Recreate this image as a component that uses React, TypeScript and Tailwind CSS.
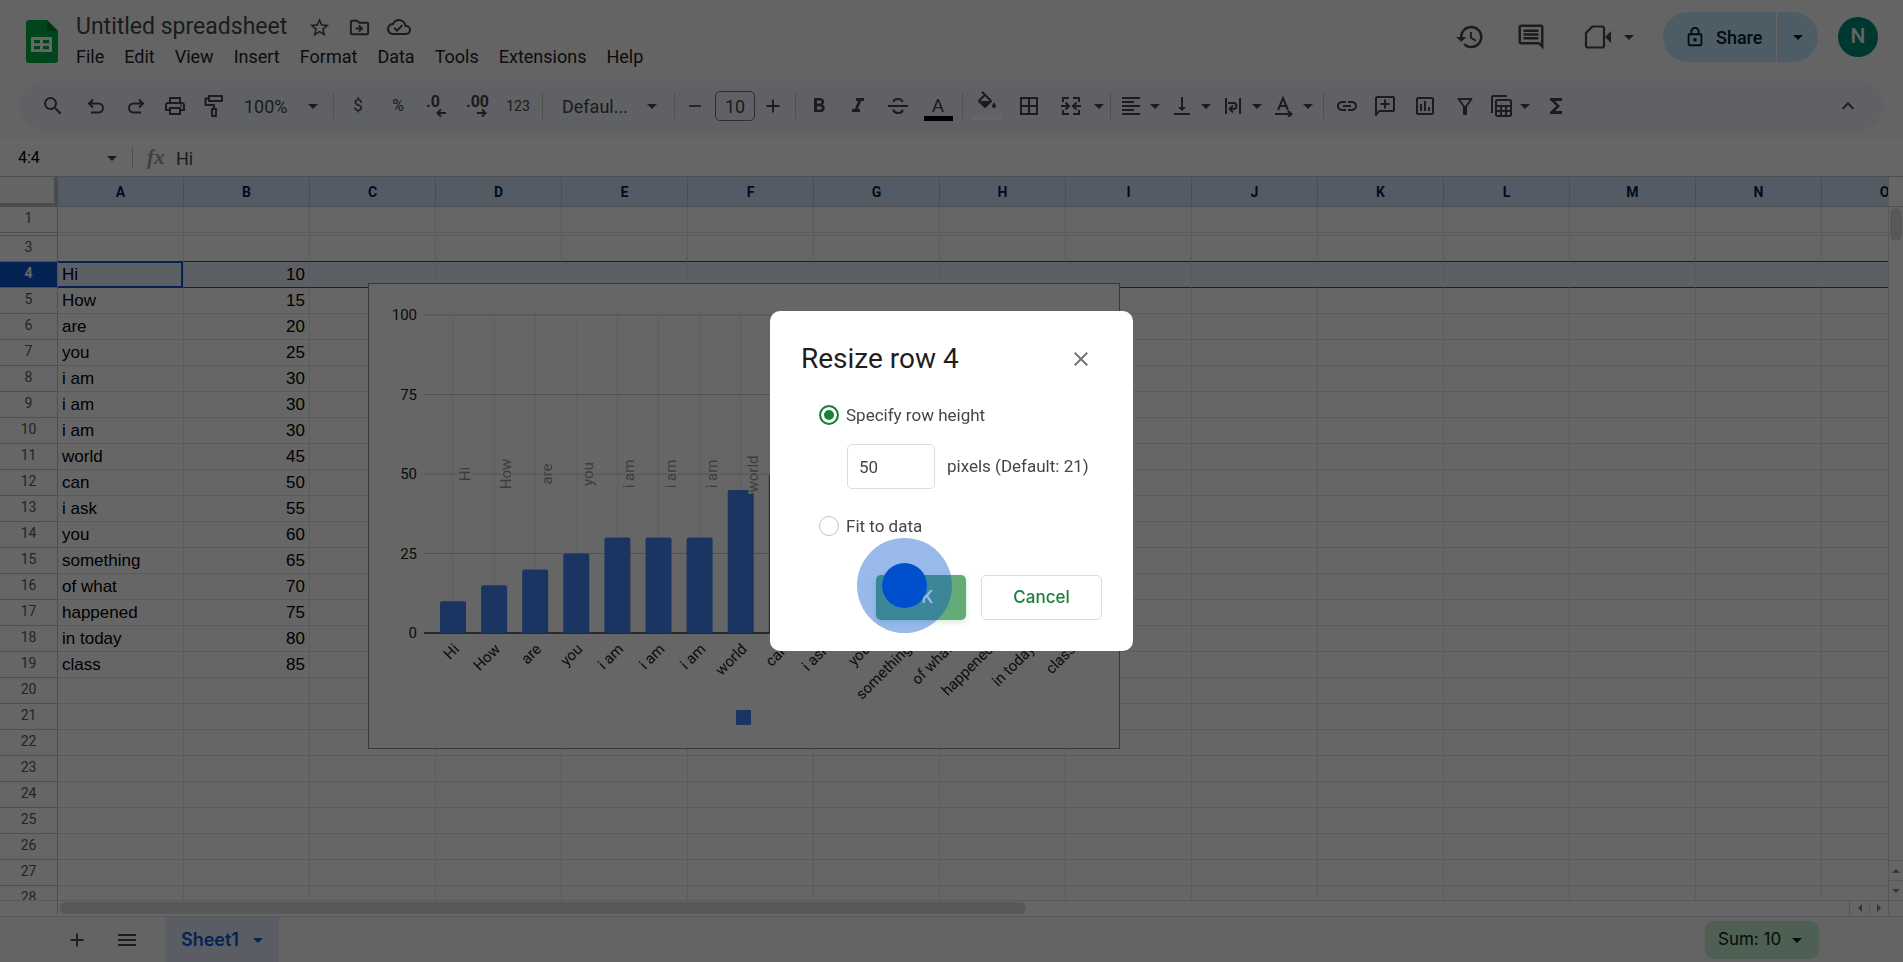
import type { ReactNode } from "react";
import {
  MdAdd,
  MdArrowDropDown,
  MdBorderAll,
  MdClose,
  MdFormatAlignLeft,
  MdFormatBold,
  MdFormatItalic,
  MdFunctions,
  MdHistory,
  MdKeyboardArrowUp,
  MdLink,
  MdMenu,
  MdOutlineCloudDone,
  MdOutlineDriveFileMove,
  MdOutlineInsertChart,
  MdOutlineInsertComment,
  MdOutlineLock,
  MdOutlinePrint,
  MdRemove,
  MdSearch,
  MdStarBorder,
  MdVerticalAlignBottom,
} from "react-icons/md";

const menus = ["File", "Edit", "View", "Insert", "Format", "Data", "Tools", "Extensions", "Help"];

const columns = ["A", "B", "C", "D", "E", "F", "G", "H", "I", "J", "K", "L", "M", "N", "O"];

const entries = [
  { label: "Hi", value: 10 },
  { label: "How", value: 15 },
  { label: "are", value: 20 },
  { label: "you", value: 25 },
  { label: "i am", value: 30 },
  { label: "i am", value: 30 },
  { label: "i am", value: 30 },
  { label: "world", value: 45 },
  { label: "can", value: 50 },
  { label: "i ask", value: 55 },
  { label: "you", value: 60 },
  { label: "something", value: 65 },
  { label: "of what", value: 70 },
  { label: "happened", value: 75 },
  { label: "in today", value: 80 },
  { label: "class", value: 85 },
];

// row 2 is collapsed
const rows = Array.from({ length: 28 }, (_, i) => i + 1);

const roboto = "font-['Roboto','Liberation_Sans',sans-serif]";
const inter = "font-['Inter','Roboto',sans-serif]";

function Sep() {
  return <span className="mx-1 h-[26px] w-px shrink-0 bg-[#c7c7c7]" />;
}

function Tool({ label, className = "w-10", children }: { label: string; className?: string; children: ReactNode }) {
  return (
    <button aria-label={label} className={`flex h-9 shrink-0 items-center justify-center ${className}`}>
      {children}
    </button>
  );
}

function Caret({ label, className = "w-4" }: { label: string; className?: string }) {
  return (
    <button aria-label={label} className={`flex h-9 shrink-0 items-center justify-center ${className}`}>
      <MdArrowDropDown className="size-6 shrink-0" />
    </button>
  );
}

function SheetsLogo() {
  return (
    <svg viewBox="0 0 32 43" className="h-[43px] w-8 shrink-0" aria-hidden="true">
      <path d="M3 0h18l11 11v29a3 3 0 0 1-3 3H3a3 3 0 0 1-3-3V3a3 3 0 0 1 3-3z" fill="#00ac47" />
      <path d="M21 0l11 11H21z" fill="#00832d" />
      <path d="M5 17h21v15H5zM8 20v3.200h6V20zm9 0v3.200h6V20zM8 26v3.200h6V26zm9 0v3.200h6V26z" fill="#fff" fillRule="evenodd" />
    </svg>
  );
}

function VideoIcon() {
  return (
    <svg viewBox="0 0 28 28" className="size-7" aria-hidden="true">
      <path d="M8.500 3.500H18a2 2 0 0 1 2 2v17a2 2 0 0 1-2 2H4a2 2 0 0 1-2-2V10z" fill="none" stroke="currentColor" strokeWidth="2.200" strokeLinejoin="round" />
      <path d="M21 14l6-6v12z" fill="currentColor" />
    </svg>
  );
}

function UndoIcon() {
  return (
    <svg viewBox="0 0 20 20" className="size-5" fill="none" stroke="currentColor" strokeWidth="2" aria-hidden="true">
      <path d="M7 3.500L3 7.500l4 4M3.500 7.500h9a4.500 4.500 0 0 1 0 9H5" />
    </svg>
  );
}

function RedoIcon() {
  return (
    <svg viewBox="0 0 20 20" className="size-5" fill="none" stroke="currentColor" strokeWidth="2" aria-hidden="true">
      <path d="M13 3.500l4 4-4 4M16.500 7.500h-9a4.500 4.500 0 0 0 0 9H15" />
    </svg>
  );
}

function PaintIcon() {
  return (
    <svg viewBox="0 0 22 24" className="h-6 w-[22px]" fill="none" stroke="currentColor" strokeWidth="2" aria-hidden="true">
      <path d="M5 2h13v5H5zM5 4.500H1.500V11H10v4" strokeLinejoin="round" />
      <path d="M8 15h4v7H8z" strokeLinejoin="round" />
    </svg>
  );
}

function DecimalIcon({ digits, increase }: { digits: string; increase?: boolean }) {
  return (
    <svg viewBox="0 0 26 28" className="h-7 w-[26px]" aria-hidden="true">
      <text x="1" y="15" fontSize="16" fontWeight="700" fill="currentColor" className={roboto}>
        {digits}
      </text>
      <path
        d={increase ? "M12 21h8M17 17.500l3.500 3.500-3.500 3.500" : "M21 21h-8M16 17.500L12.500 21l3.500 3.500"}
        fill="none"
        stroke="currentColor"
        strokeWidth="2"
      />
    </svg>
  );
}

function StrikeIcon() {
  return (
    <svg viewBox="0 0 22 22" className="size-[22px]" fill="none" stroke="currentColor" strokeWidth="2.200" aria-hidden="true">
      <path d="M1 11h20" strokeWidth="2" />
      <path d="M15.500 7c-.3-2-2-3-4.500-3S6.700 5 6.500 7M6.500 14.500c.3 2.500 2 3.500 4.500 3.500s4.500-1.300 4.500-3.500" />
    </svg>
  );
}

function FillIcon() {
  return (
    <svg viewBox="0 0 24 24" className="size-6" aria-hidden="true">
      <path d="M16.560 8.940L7.620 0 6.210 1.410l2.380 2.380-5.150 5.150c-.59.590-.59 1.540 0 2.120l5.500 5.500c.29.290.68.440 1.060.440s.77-.15 1.060-.44l5.500-5.500c.59-.58.590-1.530 0-2.120zM5.210 10L10 5.210 14.790 10zM19 11.500s-2 2.170-2 3.500c0 1.100.9 2 2 2s2-.9 2-2c0-1.330-2-3.500-2-3.500z" fill="currentColor" />
    </svg>
  );
}

function MergeIcon() {
  return (
    <svg viewBox="0 0 22 22" className="size-[22px]" fill="none" stroke="currentColor" strokeWidth="2" aria-hidden="true">
      <path d="M9 3H3v4M13 3h6v4M9 19H3v-4M13 19h6v-4" />
      <path d="M1 11h7M5.500 7.500L9 11l-3.500 3.500M21 11h-7M16.500 7.500L13 11l3.500 3.500" />
    </svg>
  );
}

function WrapIcon() {
  return (
    <svg viewBox="0 0 20 20" className="size-5" fill="none" stroke="currentColor" strokeWidth="2" aria-hidden="true">
      <path d="M3 2v16M17 2v16" />
      <path d="M5 7h5.500a3 3 0 0 1 0 6H7M10 9.500L6.500 13l3.500 3.500" />
    </svg>
  );
}

function RotateIcon() {
  return (
    <svg viewBox="0 0 20 22" className="h-[22px] w-5" fill="none" stroke="currentColor" strokeWidth="2" aria-hidden="true">
      <path d="M4 15L9 3l5 12M6 11h6" />
      <path d="M1 19h15M14 16l3.500 3-3.500 3" />
    </svg>
  );
}

function AddCommentIcon() {
  return (
    <svg viewBox="0 0 22 22" className="size-[22px]" fill="none" stroke="currentColor" strokeWidth="2" aria-hidden="true">
      <path d="M2 20V3.500A1.500 1.500 0 0 1 3.500 2h15A1.500 1.500 0 0 1 20 3.500v11a1.500 1.500 0 0 1-1.500 1.500H5z" strokeLinejoin="round" />
      <path d="M11 4.500v9M6.500 9h9" />
    </svg>
  );
}

function FilterIcon() {
  return (
    <svg viewBox="0 0 20 20" className="size-5" fill="none" stroke="currentColor" strokeWidth="2" aria-hidden="true">
      <path d="M3.500 3h13L11 10.500V18H9v-7.500z" strokeLinejoin="round" />
    </svg>
  );
}

function TableViewIcon() {
  return (
    <svg viewBox="0 0 22 24" className="h-6 w-[22px]" fill="none" stroke="currentColor" strokeWidth="2" aria-hidden="true">
      <path d="M2 19V3.500A1.500 1.500 0 0 1 3.500 2H17" />
      <rect x="6" y="6" width="15" height="16" rx="1.500" />
      <path d="M6 12h15M6 17h15M11 12v10M16 12v10" />
    </svg>
  );
}

function Header() {
  return (
    <header className="flex h-[81px] shrink-0 items-start justify-between text-[#444746]">
      <div className="flex pl-[26px] pt-5">
        <SheetsLogo />
        <div className="-mt-2 ml-[18px] flex flex-col pt-px">
          <div className="flex h-7 items-center">
            <h1 className={`text-[23px] leading-7 ${roboto}`}>Untitled spreadsheet</h1>
            <button aria-label="Star" className="ml-3 flex w-10 justify-center">
              <MdStarBorder className="size-[23px]" />
            </button>
            <button aria-label="Move" className="flex w-10 justify-center">
              <MdOutlineDriveFileMove className="size-[23px]" />
            </button>
            <button aria-label="Document status" className="flex w-10 justify-center">
              <MdOutlineCloudDone className="size-6" />
            </button>
          </div>
          <nav className={`mt-0.5 flex gap-5 text-[18px] leading-7 text-[#1f1f1f] ${roboto}`}>
            {menus.map((menu) => (
              <button key={menu}>{menu}</button>
            ))}
          </nav>
        </div>
      </div>

      <div className="flex items-center pr-[25px] pt-3">
        <button aria-label="Version history" className="flex w-[62px] justify-center">
          <MdHistory className="size-[30px]" />
        </button>
        <button aria-label="Comments" className="flex w-[60px] justify-center">
          <MdOutlineInsertComment className="size-[30px]" />
        </button>
        <button aria-label="Join a call" className="ml-3.5 flex w-[46px] justify-center">
          <VideoIcon />
        </button>
        <Caret label="Call options" />
        <div className={`ml-[26px] flex h-[50px] items-center rounded-full bg-[#c2e7ff] text-[#001d35] ${roboto}`}>
          <button className="flex h-full w-[113px] items-center gap-2.5 pl-[21px] text-[18px] font-medium">
            <MdOutlineLock className="size-[22px]" />
            Share
          </button>
          <span className="h-full w-px bg-white" />
          <Caret label="Share options" className="w-[41px]" />
        </div>
        <button className={`ml-5 flex size-10 items-center justify-center rounded-full bg-[#00897b] text-[21px] font-medium text-white ${roboto}`}>
          N
        </button>
      </div>
    </header>
  );
}

function Toolbar() {
  return (
    <div className={`mx-5 mb-2 flex h-[50px] shrink-0 items-center rounded-full bg-[#edf2fa] pl-[13px] pr-[15px] text-[17px] text-[#444746] ${roboto}`}>
      <Tool label="Search the menus"><MdSearch className="size-6" /></Tool>
      <Tool label="Undo" className="ml-[3px] w-10"><UndoIcon /></Tool>
      <Tool label="Redo" className="w-[39px]"><RedoIcon /></Tool>
      <Tool label="Print"><MdOutlinePrint className="size-6" /></Tool>
      <Tool label="Paint format"><PaintIcon /></Tool>
      <button className="flex h-9 w-[94px] items-center justify-between pl-[9px] pr-1 text-[18px]">
        100%
        <MdArrowDropDown className="size-6" />
      </button>
      <Sep />
      <Tool label="Format as currency">$</Tool>
      <Tool label="Format as percent"><span className="text-base">%</span></Tool>
      <Tool label="Decrease decimal places"><DecimalIcon digits=".0" /></Tool>
      <Tool label="Increase decimal places"><DecimalIcon digits=".00" increase /></Tool>
      <Tool label="More formats"><span className="text-sm">123</span></Tool>
      <Sep />
      <button className="flex h-9 w-[123px] items-center justify-between pl-[15px] pr-1.5 text-[18px]">
        Defaul...
        <MdArrowDropDown className="size-6" />
      </button>
      <Sep />
      <Tool label="Decrease font size" className="w-[31px]"><MdRemove className="size-5" /></Tool>
      <input
        aria-label="Font size"
        defaultValue="10"
        className="ml-[5px] h-[30px] w-10 rounded-[5px] border border-[#747775] text-center text-[18px]"
      />
      <Tool label="Increase font size" className="w-9"><MdAdd className="size-[22px]" /></Tool>
      <Sep />
      <Tool label="Bold" className="w-[38px]"><MdFormatBold className="size-6" /></Tool>
      <Tool label="Italic"><MdFormatItalic className="size-6" /></Tool>
      <Tool label="Strikethrough"><StrikeIcon /></Tool>
      <Tool label="Text color">
        <span className="mt-1 flex flex-col items-center">
          <span className="text-[19px] leading-5">A</span>
          <span className="h-[5px] w-[29px] bg-black" />
        </span>
      </Tool>
      <Sep />
      <Tool label="Fill color">
        <span className="-mt-0.5 flex flex-col items-center">
          <FillIcon />
          <span className="h-[5px] w-[29px] bg-white" />
        </span>
      </Tool>
      <Tool label="Borders" className="ml-0.5 w-10"><MdBorderAll className="size-6" /></Tool>
      <Tool label="Merge cells" className="ml-0.5 w-10"><MergeIcon /></Tool>
      <Caret label="Merge options" className="w-[15px]" />
      <Sep />
      <Tool label="Horizontal align" className="w-8"><MdFormatAlignLeft className="size-6" /></Tool>
      <Caret label="Horizontal align options" className="mr-[3px] w-4" />
      <Tool label="Vertical align" className="w-8"><MdVerticalAlignBottom className="size-6" /></Tool>
      <Caret label="Vertical align options" className="mr-[3px] w-4" />
      <Tool label="Text wrapping" className="w-8"><WrapIcon /></Tool>
      <Caret label="Text wrapping options" className="mr-[3px] w-4" />
      <Tool label="Text rotation" className="w-8"><RotateIcon /></Tool>
      <Caret label="Text rotation options" className="mr-[3px] w-4" />
      <Sep />
      <Tool label="Insert link" className="w-[37px]"><MdLink className="size-6" /></Tool>
      <Tool label="Insert comment"><AddCommentIcon /></Tool>
      <Tool label="Insert chart"><MdOutlineInsertChart className="size-6" /></Tool>
      <Tool label="Create a filter"><FilterIcon /></Tool>
      <Tool label="Table views" className="w-8"><TableViewIcon /></Tool>
      <Caret label="Table view options" className="mr-[3px] w-4" />
      <Tool label="Functions"><MdFunctions className="size-6" /></Tool>
      <Tool label="Hide the menus" className="ml-auto w-10"><MdKeyboardArrowUp className="size-6" /></Tool>
    </div>
  );
}

function FormulaBar() {
  return (
    <div className={`flex h-[37px] shrink-0 items-center bg-white pt-px text-base text-[#444746] ${roboto}`}>
      <input aria-label="Name box" defaultValue="4:4" className="w-[82px] pl-[18px] text-black" />
      <Caret label="Named ranges" className="ml-5 w-5" />
      <span className="ml-2.5 h-[22px] w-px bg-[#c7c7c7]" />
      <span className="ml-3.5 w-[29px] font-['Liberation_Serif',serif] text-[21px] font-bold italic text-[#9aa0a6]">fx</span>
      <input aria-label="Formula" defaultValue="Hi" className="flex-1 text-[18px]" />
    </div>
  );
}

function SheetTable() {
  return (
    <table className="w-[1948px] table-fixed border-separate border-spacing-0 font-['Liberation_Sans',Arial,sans-serif] text-[17px] leading-6 text-black">
      <colgroup>
        <col className="w-[58px]" />
        {columns.map((c) => (
          <col key={c} className="w-[126px]" />
        ))}
      </colgroup>
      <thead>
        <tr className="h-[30px]">
          <td className="border-b-4 border-r-4 border-[#bcbcbc] bg-[#f8f9fa]" />
          {columns.map((c) => (
            <th key={c} className={`border-b border-r border-[#c0c4c9] bg-[#d3e3fd] p-0 text-[14px] font-bold text-[#041e49] ${roboto}`}>
              {c}
            </th>
          ))}
        </tr>
      </thead>
      <tbody>
        {rows.map((row) => {
          if (row === 2) {
            return (
              <tr key={row} className="h-[3px]">
                <td className="border-b border-r border-[#c0c4c0] p-0" />
                {columns.map((c) => (
                  <td key={c} className="border-b border-r border-[#e1e3e1] p-0" />
                ))}
              </tr>
            );
          }
          const entry = entries[row - 4];
          const selected = row === 4;
          const line = selected || row === 3 ? "border-b-[#0b57d0]" : "border-b-[#e1e3e1]";
          return (
            <tr key={row} className="h-[26px]">
              <th
                className={`border-b border-r border-[#c0c4c0] p-0 pb-0.5 text-[14px] leading-[23px] ${roboto} ${
                  selected ? "bg-[#0b57d0] font-bold text-white" : "font-normal text-[#575b5f]"
                }`}
              >
                {row}
              </th>
              {columns.map((c, i) => (
                <td
                  key={c}
                  className={`border-b border-r border-r-[#e1e3e1] px-1 pb-0 pt-px ${line} ${selected ? "bg-[#e6effd]" : ""} ${
                    selected && i === 0 ? "shadow-[inset_-2px_-1px_0_#0b57d0,inset_0_1px_0_#0b57d0]" : ""
                  } ${i === 1 ? "text-right" : ""}`}
                >
                  {entry && i === 0 ? entry.label : entry && i === 1 ? entry.value : null}
                </td>
              ))}
            </tr>
          );
        })}
      </tbody>
    </table>
  );
}

function Chart() {
  const base = 349;
  const unit = 3.18;
  const step = 41.1;
  return (
    <svg viewBox="0 0 750 464" className={`h-[466px] w-[752px] border border-[#8f8f8f] bg-white text-[15px] ${roboto}`} role="img" aria-label="Column chart">
      {entries.map((_, i) => (
        <path key={i} d={`M${84 + i * step} 31V${base}`} stroke="#ebebeb" />
      ))}
      {[100, 75, 50, 25, 0].map((tick) => {
        const y = base - tick * unit;
        return (
          <g key={tick}>
            <path d={`M55 ${y}H723`} stroke={tick ? "#ccc" : "#666"} strokeWidth={tick ? 1 : 2} />
            <text x="48" y={y + 5} textAnchor="end" fill="#222">
              {tick}
            </text>
          </g>
        );
      })}
      {entries.map(({ label, value }, i) => {
        const x = 84 + i * step;
        const h = value * unit;
        return (
          <g key={i}>
            <path d={`M${x - 13} ${base}V${base - h + 2}q0-2 2-2h22q2 0 2 2V${base}z`} fill="#4285f4" />
            <text
              transform={`translate(${x + 17} 190) rotate(-90)`}
              textAnchor="middle"
              fill="#999"
              stroke="#fff"
              strokeWidth="3"
              paintOrder="stroke"
            >
              {label}
            </text>
            <text transform={`translate(${x + 7} 366) rotate(-45)`} textAnchor="end" fill="#222">
              {label}
            </text>
          </g>
        );
      })}
      <rect x="367" y="426" width="15" height="15" rx="1" fill="#4285f4" />
    </svg>
  );
}

function Grid() {
  return (
    <main className="flex min-h-0 flex-1 flex-col border-t border-[#c0c4c9] bg-white">
      <div className="flex min-h-0 flex-1">
        <div className="relative min-w-0 flex-1 overflow-hidden">
          <SheetTable />
          <div className="absolute left-[368px] top-[106px]">
            <Chart />
          </div>
        </div>
        <div className="flex w-[15px] shrink-0 flex-col border-l border-[#dadce0]">
          <div className="h-[30px] border-b border-[#c0c4c9]" />
          <div className="mx-px mt-px h-[33px] rounded-full bg-[#dadce0]" />
          <div className="mt-auto flex flex-col items-center border-t border-[#dadce0] text-[#80868b]">
            <button aria-label="Scroll up" className="flex h-5 w-full items-center justify-center border-b border-[#dadce0]">
              <span className="border-x-4 border-b-4 border-x-transparent border-b-current" />
            </button>
            <button aria-label="Scroll down" className="flex h-[19px] w-full items-center justify-center">
              <span className="border-x-4 border-t-4 border-x-transparent border-t-current" />
            </button>
          </div>
        </div>
      </div>
      <div className="flex h-4 shrink-0 border-t border-[#dadce0] pb-px">
        <div className="w-[58px] border-r border-[#c0c4c0]" />
        <div className="flex-1 pl-0.5 pt-px">
          <div className="h-3 w-[54%] rounded-full bg-[#dadce0]" />
        </div>
        <button aria-label="Scroll left" className="flex w-5 items-center justify-center border-l border-[#dadce0] text-[#80868b]">
          <span className="border-y-4 border-r-4 border-y-transparent border-r-current" />
        </button>
        <button aria-label="Scroll right" className="flex w-5 items-center justify-center border-x border-[#dadce0] text-[#80868b]">
          <span className="border-y-4 border-l-4 border-y-transparent border-l-current" />
        </button>
        <div className="w-3.5" />
      </div>
    </main>
  );
}

function SheetTabs() {
  return (
    <footer className={`flex h-[46px] shrink-0 items-center border-t border-[#dadce0] text-[17px] text-[#444746] ${inter}`}>
      <button aria-label="Add sheet" className="ml-[52px] flex w-[50px] justify-center">
        <MdAdd className="size-[22px]" />
      </button>
      <button aria-label="All sheets" className="flex w-[50px] justify-center">
        <MdMenu className="size-6" />
      </button>
      <button className="ml-3.5 flex h-full w-[113px] items-center gap-[7px] bg-[#e1e9f7] pl-[15px] text-[18px] font-semibold text-[#0b57d0]">
        Sheet1
        <MdArrowDropDown className="size-6" />
      </button>
      <button className="ml-auto mr-[84px] flex h-[38px] w-[114px] items-center gap-1 rounded-[9px] bg-[#c4eed0] pl-[13px] text-[#072711]">
        Sum: 10
        <MdArrowDropDown className="size-6" />
      </button>
    </footer>
  );
}

function ResizeDialog() {
  return (
    <div className="fixed inset-0 flex items-center justify-center bg-black/60">
      <form
        role="dialog"
        aria-labelledby="resize-title"
        className={`relative flex w-[363px] flex-col rounded-[10px] bg-white pb-[31px] pl-[31px] text-[17px] text-[#444746] ${roboto}`}
      >
        <div className="flex items-center justify-between pr-10 pt-[30px]">
          <h2 id="resize-title" className="text-[28px] leading-9 text-[#1f1f1f]">
            Resize row 4
          </h2>
          <button type="button" aria-label="Close" className="text-[#757575]">
            <MdClose className="size-6" />
          </button>
        </div>

        <label className="mt-7 flex items-center gap-[7px] pl-[18px] leading-5">
          <input
            type="radio"
            name="resize"
            defaultChecked
            className="size-5 appearance-none rounded-full border-2 border-[#188038] bg-[#188038] shadow-[inset_0_0_0_3px_white]"
          />
          Specify row height
        </label>
        <div className="mt-[19px] flex items-center gap-3 pl-[46px]">
          <input
            id="row-height"
            type="text"
            defaultValue="50"
            className="h-[45px] w-[88px] rounded-[5px] border border-[#dadce0] pl-[11px]"
          />
          <label htmlFor="row-height">pixels (Default: 21)</label>
        </div>
        <label className="mt-[27px] flex items-center gap-[7px] pl-[18px] leading-5">
          <input type="radio" name="resize" className="size-5 appearance-none rounded-full border border-[#bdc1c6]" />
          Fit to data
        </label>

        <div className={`mt-[39px] flex justify-end gap-[15px] pr-[31px] font-medium ${inter}`}>
          <button type="button" className="h-[45px] w-[90px] rounded-[5px] bg-[#65ab78] font-semibold text-white shadow-[0_2px_6px_#cfe8d5]">
            OK
          </button>
          <button type="button" className="h-[45px] w-[121px] rounded-[5px] border border-[#dadce0] text-[#188038]">
            Cancel
          </button>
        </div>

        {/* click highlight */}
        <span className="pointer-events-none absolute left-[87px] top-[227px] flex size-[95px] items-center justify-center rounded-full bg-[#0050cd]/40">
          <span className="size-[45px] rounded-full bg-[#0050cd]" />
        </span>
      </form>
    </div>
  );
}

export default function App() {
  return (
    <div className="flex h-screen flex-col overflow-hidden bg-[#f9fbfd]">
      <Header />
      <Toolbar />
      <FormulaBar />
      <Grid />
      <SheetTabs />
      <ResizeDialog />
    </div>
  );
}
